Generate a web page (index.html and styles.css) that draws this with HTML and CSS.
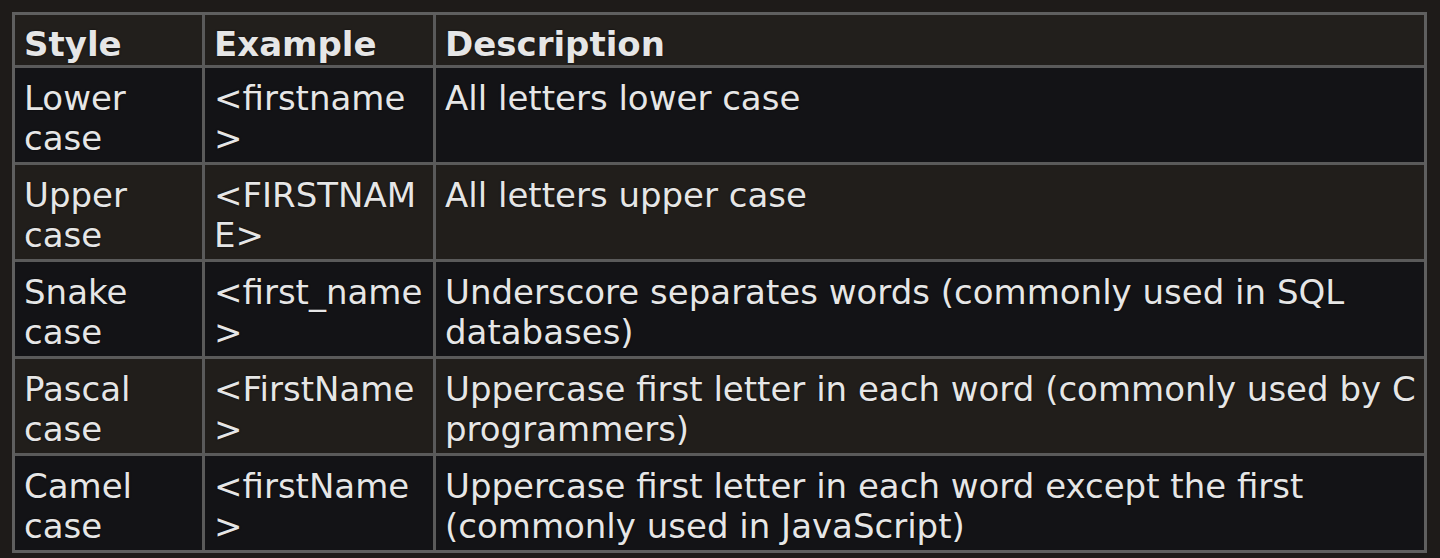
FILE: index.html
```html
<!DOCTYPE html>
<html lang="en">
<head>
<meta charset="utf-8">
<title>Naming styles</title>
<link rel="stylesheet" href="styles.css">
</head>
<body>
<table class="styles">
  <colgroup>
    <col class="c-style">
    <col class="c-example">
    <col class="c-desc">
  </colgroup>
  <thead>
    <tr><th>Style</th><th>Example</th><th class="last">Description</th></tr>
  </thead>
  <tbody>
    <tr class="dark"><td>Lower case</td><td>&lt;firstname&gt;</td><td class="last">All letters lower case</td></tr>
    <tr class="brown"><td>Upper case</td><td>&lt;FIRSTNAME&gt;</td><td class="last">All letters upper case</td></tr>
    <tr class="dark"><td>Snake case</td><td>&lt;first_name&gt;</td><td class="last">Underscore separates words (commonly used in SQL databases)</td></tr>
    <tr class="brown"><td>Pascal case</td><td>&lt;FirstName&gt;</td><td class="last">Uppercase first letter in each word (commonly used by C programmers)</td></tr>
    <tr class="dark final"><td>Camel case</td><td>&lt;firstName&gt;</td><td class="last">Uppercase first letter in each word except the first (commonly used in JavaScript)</td></tr>
  </tbody>
</table>
</body>
</html>
```

FILE: styles.css
```css
html, body {
  margin: 0;
  background: #1e1b19;
}

body {
  padding: 12px;
  font-family: "DejaVu Sans", Verdana, sans-serif;
  font-size: 34px;
  line-height: 40px;
  color: #e6e6e6;
}

.styles {
  width: 1415px;
  table-layout: fixed;
  border-collapse: separate;
  border-spacing: 0;
  border: 3px solid #5f5f5f;
}

.c-style { width: 190px; }
.c-example { width: 231px; }

.styles th,
.styles td {
  box-sizing: border-box;
  text-align: left;
  vertical-align: top;
  border-right: 3px solid #5a5a5a;
  border-bottom: 3px solid #5a5a5a;
  overflow-wrap: anywhere;
  text-shadow: 0 0 2px rgba(0, 0, 0, 0.8);
}

.styles th {
  padding: 9px 3px 1px 9px;
  font-weight: bold;
  background: #221f1c;
}

.styles td {
  padding: 10px 3px 4px 9px;
}

.styles .last {
  border-right: none;
  padding-right: 0;
}

.styles tr.final td {
  border-bottom: none;
}

.dark td {
  background: #131316;
}

.brown td {
  background: #211e1b;
}
```
